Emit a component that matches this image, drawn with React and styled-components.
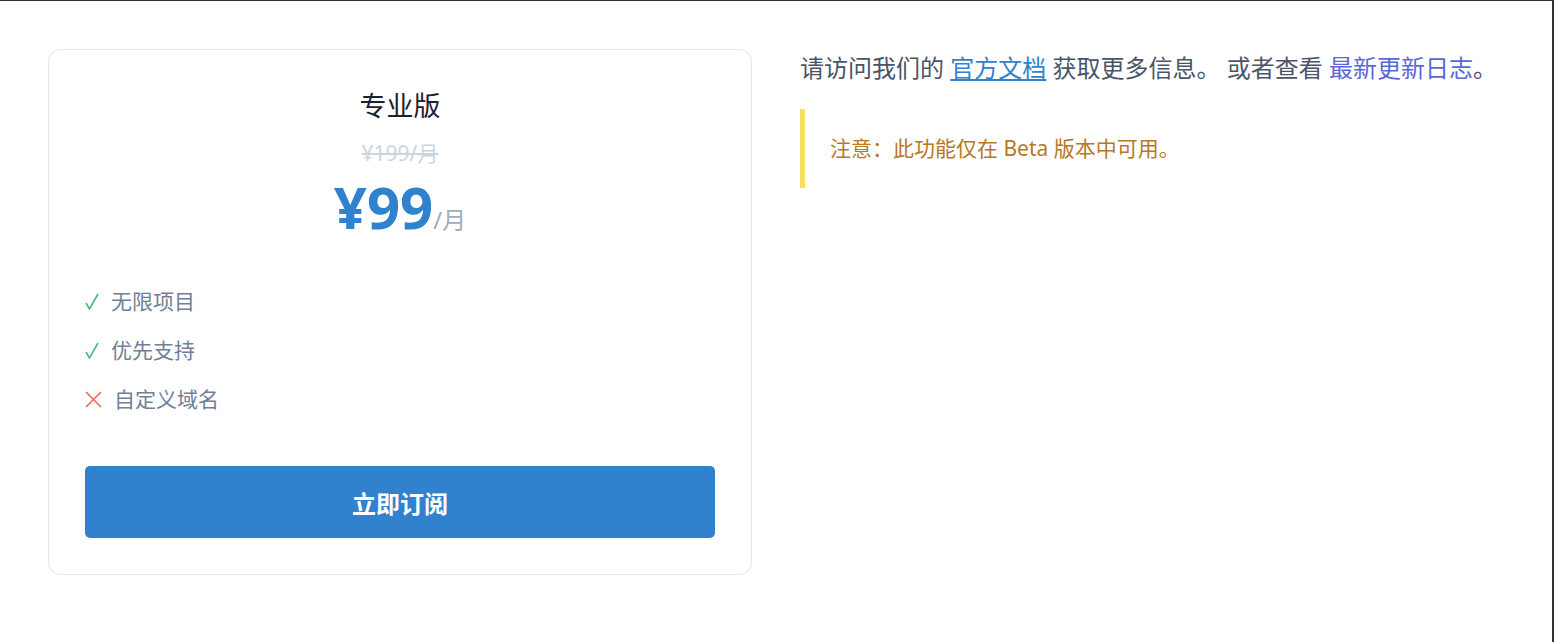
import React from "react";
import styled, { createGlobalStyle } from "styled-components";

const GlobalStyle = createGlobalStyle`
  html, body {
    margin: 0;
    padding: 0;
    background: #ffffff;
  }
  body {
    font-family: "Noto Sans", "Noto Sans CJK SC", sans-serif;
    color: #2d3748;
  }
`;

const Page = styled.div`
  box-sizing: border-box;
  min-height: 642px;
  border-top: 1px solid #333;
  border-right: 2px solid #333;
  padding: 48px;
  display: grid;
  grid-template-columns: 1fr 1fr;
  gap: 48px;
  align-items: start;
`;

const Card = styled.div`
  border: 1px solid #e2e8f0;
  border-radius: 12px;
  padding: 36px;
  display: flex;
  flex-direction: column;
`;

const Header = styled.div`
  text-align: center;
`;

const PlanName = styled.h3`
  margin: 0;
  font-size: 27px;
  font-weight: 400;
  color: #1a202c;
  line-height: 40px;
`;

const OldPrice = styled.div`
  margin-top: 13px;
  font-size: 21px;
  color: #cbd5e0;
  text-decoration: line-through;
  line-height: 28px;
`;

const Price = styled.div`
  margin-top: 8px;
  font-size: 58px;
  font-weight: 700;
  color: #3182ce;
  line-height: 64px;
`;

const Period = styled.span`
  font-size: 24px;
  font-weight: 400;
  color: #a0aec0;
`;

const Features = styled.ul`
  list-style: none;
  margin: 35px 0 0;
  padding: 0;
  display: flex;
  flex-direction: column;
  gap: 21px;
`;

const Feature = styled.li`
  display: flex;
  align-items: center;
  gap: 12px;
  font-size: 21px;
  color: #718096;
  line-height: 28px;
`;

const Mark = styled.svg`
  flex: none;
  width: ${(p) => (p.$ok ? "14px" : "17px")};
  height: 17px;
  stroke: ${(p) => (p.$ok ? "#48bb78" : "#f56565")};
  stroke-width: 1.6;
  fill: none;
`;

const Subscribe = styled.button`
  margin-top: 53px;
  height: 72px;
  border: none;
  border-radius: 5px;
  background: #3182ce;
  color: #fff;
  font-family: "Noto Sans", "Noto Sans CJK SC", sans-serif;
  font-size: 24px;
  font-weight: 700;
  cursor: pointer;
`;

const Side = styled.div``;

const Intro = styled.p`
  margin: 0;
  font-size: 24px;
  line-height: 38px;
  color: #4a5568;
`;

const DocLink = styled.a`
  color: #3182ce;
  text-decoration: underline;
`;

const LogLink = styled.a`
  color: #5a67d8;
  text-decoration: none;
`;

const Callout = styled.div`
  margin-top: 22px;
  border-left: 5px solid #f6e05e;
  padding: 24px 24px 24px 25px;
  font-size: 21px;
  line-height: 31px;
  color: #b7791f;
`;

const features = [
  { ok: true, text: "无限项目" },
  { ok: true, text: "优先支持" },
  { ok: false, text: "自定义域名" },
];

const CheckMark = () => (
  <Mark $ok viewBox="0 0 14 17">
    <path d="M1 10 L4.5 16 L13 1" />
  </Mark>
);

const CrossMark = () => (
  <Mark viewBox="0 0 17 17">
    <path d="M1 1 L16 16 M16 1 L1 16" />
  </Mark>
);

export default function App() {
  return (
    <>
      <GlobalStyle />
      <Page>
        <Card>
          <Header>
            <PlanName>专业版</PlanName>
            <OldPrice>¥199/月</OldPrice>
            <Price>
              ¥99<Period>/月</Period>
            </Price>
          </Header>
          <Features>
            {features.map((f) => (
              <Feature key={f.text}>
                {f.ok ? <CheckMark /> : <CrossMark />}
                {f.text}
              </Feature>
            ))}
          </Features>
          <Subscribe>立即订阅</Subscribe>
        </Card>
        <Side>
          <Intro>
            请访问我们的 <DocLink href="#">官方文档</DocLink> 获取更多信息。 或者查看{" "}
            <LogLink href="#">最新更新日志</LogLink>。
          </Intro>
          <Callout>注意：此功能仅在 Beta 版本中可用。</Callout>
        </Side>
      </Page>
    </>
  );
}
